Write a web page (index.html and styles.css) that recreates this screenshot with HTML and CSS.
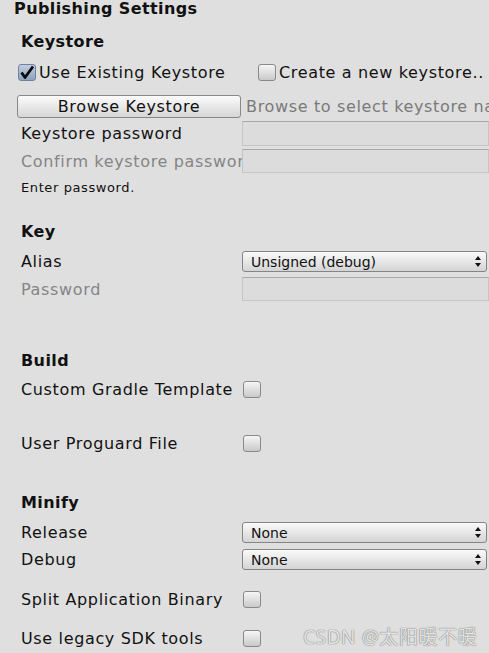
FILE: index.html
```html
<!DOCTYPE html>
<html>
<head>
<meta charset="utf-8">
<link rel="stylesheet" href="styles.css">
</head>
<body>
<div class="page">
  <div class="title">Publishing Settings</div>

  <div class="heading h-keystore">Keystore</div>
  <div class="row r-checks">
    <label class="chk-item"><span class="cb checked"><svg viewBox="0 0 18 17" width="18" height="17"><path d="M3.5 8.5 L7 13.5 L15 2.5" fill="none" stroke="#0b0b0b" stroke-width="2.8" stroke-linejoin="round"/></svg></span><span class="chk-text">Use Existing Keystore</span></label>
    <label class="chk-item second"><span class="cb"></span><span class="chk-text">Create a new keystore..</span></label>
  </div>
  <div class="row r-browse">
    <div class="btn">Browse Keystore</div>
    <div class="hint">Browse to select keystore name</div>
  </div>
  <div class="row r-field r-kpw">
    <div class="label">Keystore password</div>
    <div class="input"></div>
  </div>
  <div class="row r-field r-confirm">
    <div class="label dim">Confirm keystore password</div>
    <div class="input"></div>
  </div>
  <div class="note">Enter password.</div>

  <div class="heading h-key">Key</div>
  <div class="row r-field r-alias">
    <div class="label">Alias</div>
    <div class="select"><span>Unsigned (debug)</span><svg class="arr" viewBox="0 0 6 11" width="6" height="11"><path d="M3 0 L6 4 L0 4 Z M0 7 L6 7 L3 11 Z" fill="#111"/></svg></div>
  </div>
  <div class="row r-field r-pw">
    <div class="label dim">Password</div>
    <div class="input"></div>
  </div>

  <div class="heading h-build">Build</div>
  <div class="row r-field r-gradle">
    <div class="label">Custom Gradle Template</div>
    <div class="cbwrap"><span class="cb"></span></div>
  </div>
  <div class="row r-field r-proguard">
    <div class="label">User Proguard File</div>
    <div class="cbwrap"><span class="cb"></span></div>
  </div>

  <div class="heading h-minify">Minify</div>
  <div class="row r-field r-release">
    <div class="label">Release</div>
    <div class="select"><span>None</span><svg class="arr" viewBox="0 0 6 11" width="6" height="11"><path d="M3 0 L6 4 L0 4 Z M0 7 L6 7 L3 11 Z" fill="#111"/></svg></div>
  </div>
  <div class="row r-field r-debug">
    <div class="label">Debug</div>
    <div class="select"><span>None</span><svg class="arr" viewBox="0 0 6 11" width="6" height="11"><path d="M3 0 L6 4 L0 4 Z M0 7 L6 7 L3 11 Z" fill="#111"/></svg></div>
  </div>
  <div class="row r-field r-split">
    <div class="label">Split Application Binary</div>
    <div class="cbwrap"><span class="cb"></span></div>
  </div>
  <div class="row r-field r-legacy">
    <div class="label">Use legacy SDK tools</div>
    <div class="cbwrap"><span class="cb"></span></div>
  </div>
</div>
<div class="watermark">CSDN @太阳暖不暖</div>
</body>
</html>
```

FILE: styles.css
```css
html, body {
  margin: 0;
  padding: 0;
  background: #dfdfdf;
}
body {
  width: 489px;
  height: 653px;
  overflow: hidden;
  position: relative;
  font-family: "DejaVu Sans", Verdana, sans-serif;
  font-size: 16px;
  letter-spacing: 0.65px;
  color: #111;
}
.page {
  display: flex;
  flex-direction: column;
}
.title {
  font-weight: bold;
  font-size: 16px;
  letter-spacing: 0.4px;
  height: 18px;
  line-height: 18px;
  padding-left: 14px;
}
.heading {
  font-weight: bold;
  font-size: 16px;
  letter-spacing: 0.4px;
  height: 18px;
  line-height: 18px;
  padding-left: 21px;
}
.h-keystore { margin-top: 15px; }
.h-key { margin-top: 26px; }
.h-build { margin-top: 51px; }
.h-minify { margin-top: 42px; }

.row {
  display: flex;
  align-items: center;
}
.r-checks { margin-top: 12px; height: 18px; }
.chk-item {
  display: flex;
  align-items: center;
  width: 258px;
  padding-left: 18px;
  box-sizing: border-box;
  flex: none;
}
.chk-item.second {
  padding-left: 0;
  width: 231px;
  white-space: nowrap;
  overflow: hidden;
}
.chk-text { margin-left: 3px; white-space: nowrap; }

.cb {
  display: inline-block;
  width: 18px;
  height: 17px;
  box-sizing: border-box;
  border: 1px solid #8a8a8a;
  border-radius: 3px;
  background: linear-gradient(#f6f6f6, #c9c9c9);
  flex: none;
}
.cb.checked {
  background: linear-gradient(#c2cde0, #8ea3c2);
  border-color: #7080a0;
  position: relative;
}
.cb.checked svg {
  position: absolute;
  left: -1px;
  top: -1px;
}

.r-browse { margin-top: 14px; height: 23px; }
.btn {
  margin-left: 17px;
  width: 224px;
  height: 23px;
  box-sizing: border-box;
  border: 1px solid #888;
  border-radius: 3px;
  background: linear-gradient(#fbfbfb, #d6d6d6);
  text-align: center;
  line-height: 21px;
  flex: none;
}
.hint {
  margin-left: 5px;
  color: #7a7a7a;
  white-space: nowrap;
  overflow: hidden;
}

.r-field { height: 24px; }
.label {
  width: 221px;
  padding-left: 21px;
  white-space: nowrap;
  overflow: hidden;
  flex: none;
}
.dim { color: #858585; }
.input {
  flex: 1;
  height: 100%;
  box-sizing: border-box;
  border: 1px solid #c6c6c6;
  border-top-color: #a8a8a8;
  background: #dcdcdc;
}
.r-kpw { margin-top: 3px; height: 25px; }
.r-confirm { margin-top: 3px; height: 24px; }
.note {
  font-size: 13px;
  letter-spacing: 0.6px;
  height: 18px;
  line-height: 18px;
  padding-left: 21px;
  margin-top: 6px;
}
.r-alias { margin-top: 10px; height: 21px; }
.r-pw { margin-top: 5px; height: 24px; }

.select {
  flex: 1;
  margin-right: 2px;
  height: 100%;
  box-sizing: border-box;
  border: 1px solid #858585;
  border-radius: 3px;
  background: linear-gradient(#fafafa, #d4d4d4);
  display: flex;
  align-items: center;
  justify-content: space-between;
  padding: 0 5px 0 8px;
  font-size: 14px;
  letter-spacing: 0;
}
.arr { flex: none; }

.cbwrap {
  display: flex;
  align-items: center;
  padding-left: 1px;
}
.r-gradle { margin-top: 10px; height: 18px; }
.r-proguard { margin-top: 36px; height: 18px; }
.r-release { margin-top: 10px; height: 21px; }
.r-debug { margin-top: 6px; height: 21px; }
.r-split { margin-top: 20px; height: 18px; }
.r-legacy { margin-top: 21px; height: 18px; }

.watermark {
  position: absolute;
  left: 303px;
  top: 622px;
  font-family: "Noto Sans", "Noto Sans CJK SC", sans-serif;
  font-size: 19px;
  letter-spacing: 0.6px;
  color: rgba(255, 255, 255, 0.8);
  text-shadow: 0 0 1px #7a7a7a, 0 0 1px #7a7a7a;
  white-space: nowrap;
}
```
